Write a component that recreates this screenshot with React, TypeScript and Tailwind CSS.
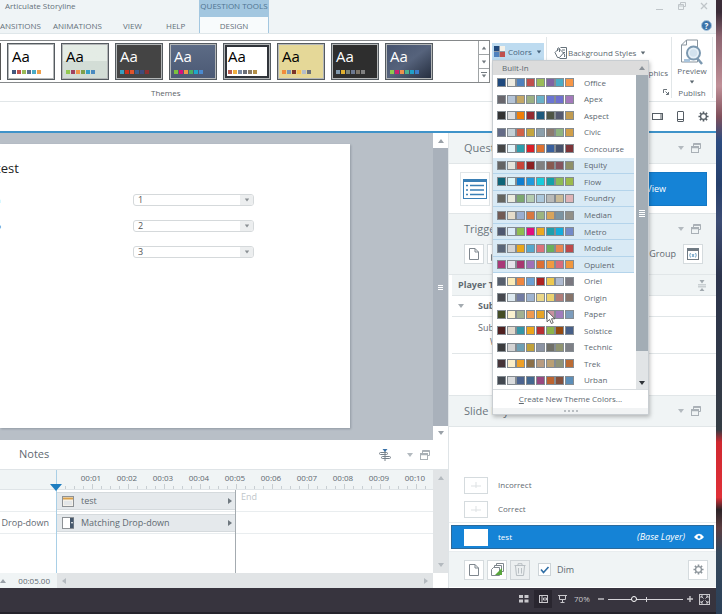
import React, { useState } from 'react';

const themes = [
    { name: 'Default', box: 'bg-white', text: 'text-black', dots: ['#44597e', '#c0504d', '#9bbb59', '#5a6d8c', '#4bacc6', '#f0a04b'] },
    { name: 'Mist', box: 'bg-linear-to-b from-[#e4ece5] from-50% to-[#d3ddd6] to-50%', text: 'text-black', dots: ['#92c951', '#a04060', '#f0964a', '#7fa04c', '#35a0c8', '#4a8ac0'] },
    { name: 'Charcoal', box: 'bg-[#444444]', text: 'text-white', dots: ['#35a0c0', '#c8301c', '#e0542c', '#3a5c8c', '#3d4c7c', '#8c3030'] },
    { name: 'Slate', box: 'bg-linear-to-b from-[#5c6b85] to-[#4c5a75]', text: 'text-white', dots: ['#7cc040', '#d8107c', '#f0964a', '#4cb060', '#1ea8c8', '#4a8ad0'] },
    { name: 'Frame', box: 'bg-white inset-ring-2 inset-ring-[#30343a]', text: 'text-black', dots: ['#b85c50', '#f0b040', '#7c8ca4', '#6c7078', '#8c7c64', '#b49048'] },
    { name: 'Sand', box: 'bg-[#e5d898]', text: 'text-black', dots: ['#f08c3c', '#7c98b4', '#7c3428', '#f8c050', '#b4bcc8', '#6c7078'] },
    { name: 'Coal', box: 'bg-[#2e2e2e]', text: 'text-white', dots: ['#8098ac', '#e0b030', '#7c8478', '#6c7890', '#7c7468', '#808080'] },
    { name: 'Dusk', box: 'bg-linear-to-br from-[#46536e] via-[#56637c] to-[#262f40]', text: 'text-white', dots: ['#8cc850', '#c82070', '#f0904c', '#4cb090', '#20a0c8', '#3c7cc8'] },
];

const colorSets = [
    { name: 'Office', colors: ['#1f497d', '#eeece1', '#4f81bd', '#c0504d', '#9bbb59', '#8064a2', '#4bacc6', '#f79646'] },
    { name: 'Apex', colors: ['#69676d', '#b5c4d6', '#c4a868', '#9cb084', '#6bb1c9', '#6b76d3', '#6f70cf', '#a379bb'] },
    { name: 'Aspect', colors: ['#323232', '#dedede', '#f07f09', '#932a30', '#1b587c', '#4e5545', '#555a70', '#c19b50'] },
    { name: 'Civic', colors: ['#646b86', '#c5d1d7', '#d16349', '#c4a540', '#8c9fab', '#8c7b70', '#8fb480', '#d19f49'] },
    { name: 'Concourse', colors: ['#464646', '#e6f5fa', '#2d9eac', '#da1f28', '#dd7030', '#39609d', '#47536c', '#7d3438'] },
    { name: 'Equity', colors: ['#646464', '#e5e4dc', '#c84438', '#8b2022', '#808080', '#875a50', '#85555e', '#8f9068'] },
    { name: 'Flow', colors: ['#0f6478', '#dbf5f9', '#0f7ed0', '#209add', '#18cbdc', '#14a0a8', '#8cba56', '#9cba4c'] },
    { name: 'Foundry', colors: ['#646560', '#eaebde', '#7ca870', '#b4ccb0', '#acc8dc', '#b9bab8', '#c8ba98', '#deb4b7'] },
    { name: 'Median', colors: ['#715a54', '#e5dcca', '#9aaed0', '#d87840', '#9cb480', '#d8a45c', '#7c94a2', '#929088'] },
    { name: 'Metro', colors: ['#4e5870', '#dcebf8', '#8fbc50', '#e0107e', '#eaa820', '#1e9eac', '#14acdc', '#738ac8'] },
    { name: 'Module', colors: ['#5a6678', '#d4d4d4', '#e9a61c', '#55a8cc', '#dc727a', '#6bb05c', '#e88651', '#bd4a4a'] },
    { name: 'Opulent', colors: ['#a83878', '#e6e4ea', '#a83670', '#a070b8', '#dc7034', '#f09a40', '#d86c7c', '#f0963d'] },
    { name: 'Oriel', colors: ['#575f6d', '#fbecb8', '#ee8640', '#6ca0d4', '#ac2220', '#ecc850', '#aebad0', '#7a7880'] },
    { name: 'Origin', colors: ['#46484e', '#dde9f0', '#727ca3', '#9fb4d0', '#ead688', '#ecd270', '#b07c78', '#86746a'] },
    { name: 'Paper', colors: ['#444d26', '#fbf2d0', '#a2b092', '#f09a50', '#e7a428', '#c892a0', '#a07cbc', '#7c9cbc'] },
    { name: 'Solstice', colors: ['#4f2020', '#e2dace', '#3496a7', '#eca41c', '#b83034', '#8cb44c', '#964a10', '#475f88'] },
    { name: 'Technic', colors: ['#3b3c3e', '#d4d4d4', '#6ea0b4', '#c0a13c', '#8c94a4', '#707068', '#909470', '#7e8086'] },
    { name: 'Trek', colors: ['#463438', '#fbeec9', '#eea028', '#8c7048', '#b89c80', '#baa074', '#909478', '#bc6c34'] },
    { name: 'Urban', colors: ['#424850', '#dadcde', '#4c6490', '#446890', '#984880', '#bc6430', '#84503c', '#5c8eb8'] },
];

const highlighted = ['Equity', 'Flow', 'Foundry', 'Median', 'Metro', 'Module', 'Opulent'];

const seconds = ['00:01', '00:02', '00:03', '00:04', '00:05', '00:06', '00:07', '00:08', '00:09', '00:10'];

type IconProps = { className?: string };

const Triangle = ({ dir = 'down', className = '' }: { dir?: 'up' | 'down' | 'left' | 'right', className?: string }) => {
    const points = {
        up: '0,5 3,1 6,5',
        down: '0,1 3,5 6,1',
        left: '5,0 1,3 5,6',
        right: '1,0 5,3 1,6',
    };
    return (
        <svg viewBox="0 0 6 6" className={`w-[6px] h-[6px] shrink-0 ${className}`} fill="currentColor"><polygon points={points[dir]} /></svg>
    );
};

const WindowsIcon = () => (
    <svg viewBox="0 0 10 10" className="w-[10px] h-[10px]" fill="none" stroke="#a9b0b6">
        <path d="M2.500 3V.5h7v5H8" />
        <path d="M2.500 1.200h7" strokeWidth="1.500" />
        <rect x=".5" y="3.500" width="7" height="6" />
        <path d="M.5 4.500h7" strokeWidth="1.500" />
    </svg>
);

const PageIcon = () => (
    <svg viewBox="0 0 10 12" className="w-[10px] h-[12px]" fill="none" stroke="#7f878e">
        <path d="M.5.5H6L9.500 4v7.500H.5z" />
        <path d="M6 .5V4h3.500" />
    </svg>
);

const TrashIcon = () => (
    <svg viewBox="0 0 12 13" className="w-[12px] h-[13px]" fill="none" stroke="#b9bfc3">
        <path d="M.5 2.500h11M4 2.500V.7h4v1.800M1.500 3l1 9.500h7l1-9.500M4.500 5v5.500M7.500 5v5.500" />
    </svg>
);

const CopyIcon = () => (
    <svg viewBox="0 0 13 13" className="w-[13px] h-[13px]" fill="#fff" stroke="#7f878e">
        <path d="M5.500.5h7v8h-7z" />
        <path d="M3.500 2.500h7v8h-7z" />
        <path d="M.5 6.500l2-2h6v8h-8z" />
        <path d="M4 12l7-7v7z" fill="#58a53c" stroke="none" />
    </svg>
);

const GearIcon = ({ className }: IconProps) => (
    <svg viewBox="0 0 12 12" className={className} fill="none" stroke="currentColor">
        <circle cx="6" cy="6" r="3.200" strokeWidth="1.400" />
        <path d="M6 .5v2M6 9.500v2M.5 6h2M9.500 6h2M2.100 2.100l1.400 1.400M8.500 8.500l1.400 1.400M2.100 9.900l1.400-1.400M8.500 3.500l1.400-1.400" strokeWidth="1.800" />
    </svg>
);

const PanelTools = () => (
    <div className="flex items-center gap-[7px]">
        <button aria-label="Options" className="text-[#b3babf]"><Triangle /></button>
        <button aria-label="Float panel"><WindowsIcon /></button>
    </div>
);

const TitleBar = () => (
    <header className="flex h-[34px] bg-[#eff4f6] border-b border-[#dfe7ea] text-[8px] text-[#63707a]">
        <div className="w-[199px] shrink-0">
            <div className="h-[12px] pl-[5px] leading-[12px] whitespace-nowrap">Articulate Storyline</div>
            <nav className="flex mt-[8px] h-[12px] leading-[12px]">
                <a href="#transitions" className="w-[53px]">ANSITIONS</a>
                <a href="#animations" className="w-[70px]">ANIMATIONS</a>
                <a href="#view" className="w-[43px]">VIEW</a>
                <a href="#help">HELP</a>
            </nav>
        </div>
        <div className="w-[70px] shrink-0 border-x border-[#a3c7e0] text-center whitespace-nowrap">
            <div className="h-[17px] bg-[#a3c7e0] leading-[12px] text-[#4f7390]">QUESTION TOOLS</div>
            <a href="#design" className="block h-[16px] bg-[#f8fbfc] leading-[18px]">DESIGN</a>
        </div>
        <div className="flex-1 flex flex-col items-end justify-between pr-[4px]">
            <div className="flex gap-[14px] h-[12px] items-center text-[#bfc5c9] pr-[4px]">
                <button aria-label="Minimize"><svg viewBox="0 0 8 8" className="size-[8px]"><path d="M0 7.500h7" stroke="currentColor" /></svg></button>
                <button aria-label="Restore"><svg viewBox="0 0 8 8" className="size-[8px]" fill="none" stroke="currentColor"><path d="M2.500 2.500v-2h5v4h-2M.5 2.500h5v5h-5zM.5 4h5" /></svg></button>
                <button aria-label="Close"><svg viewBox="0 0 8 8" className="size-[8px]"><path d="M1 1l6 6M7 1l-6 6" stroke="currentColor" strokeWidth="1.300" /></svg></button>
            </div>
            <button aria-label="Help" className="size-[11px] mb-[2px] rounded-full bg-[#3a72a8] border border-[#a9c4dc] text-white font-bold text-[8px] leading-[9px]">?</button>
        </div>
    </header>
);

const ThemeGallery = () => (
    <section className="flex-1 min-w-0 pt-[6px]">
        <div className="flex h-[43px] border-y border-r border-[#85888a]">
            <div className="flex flex-1 min-w-0 gap-[6px] py-[2px] overflow-hidden">
                <div className="w-px shrink-0 bg-[#555]"></div>
                {themes.map((t) => (
                    <button key={t.name} aria-label={t.name} className="w-[48px] h-[37px] shrink-0 border border-[#555b60] p-px bg-[#b4b7b8]">
                        <div className={`size-full pl-[3px] pt-[2px] text-left ${t.box} ${t.text}`}>
                            <div className="text-[15px] leading-[18px]">Aa</div>
                            <div className="flex gap-px mt-[5px]">
                                {t.dots.map((d) => <span key={d} className="w-[4px] h-[4px]" style={{ backgroundColor: d }}></span>)}
                            </div>
                        </div>
                    </button>
                ))}
            </div>
            <div className="w-[11px] flex flex-col border-l border-[#a0a4a6] text-[#737a80] divide-y divide-[#a0a4a6]">
                <button aria-label="Previous row" className="flex-1 flex items-center justify-center"><Triangle dir="up" className="scale-75" /></button>
                <button aria-label="Next row" className="flex-1 flex items-center justify-center"><Triangle className="scale-75" /></button>
                <button aria-label="More themes" className="flex-1 flex flex-col items-center justify-center"><span className="w-[6px] h-px bg-current"></span><Triangle className="scale-75" /></button>
            </div>
        </div>
        <h2 className="ml-[151px] mt-[4px] text-[8px] leading-[12px] text-[#5c6369]">Themes</h2>
    </section>
);

const ColorsMenu = ({ selected, onPick }: { selected: string, onPick: (name: string) => void }) => (
    <div className="absolute top-full left-0 z-10 w-[157px] bg-white border border-[#c9ced2] shadow-[1px_2px_4px_rgba(0,0,0,0.25)] text-[8px] text-[#5d6870]">
        <div className="flex h-[328px]">
            <div className="flex-1 flex flex-col">
                <div className="h-[14px] bg-[#dcdcdc] pl-[9px] leading-[14px] shrink-0">Built-In</div>
                {colorSets.map((set) => (
                    <button
                        key={set.name}
                        aria-pressed={selected === set.name}
                        onClick={() => onPick(set.name)}
                        className={highlighted.includes(set.name)
                            ? 'flex flex-1 items-center pl-[4px] mr-[2px] bg-[#d9eaf5] border-b border-[#b4d4eb]'
                            : 'flex flex-1 items-center pl-[4px] mr-[2px] border-b border-transparent'}
                    >
                        <span className="flex w-[77px] mr-[10px] justify-between">
                            {set.colors.map((c, i) => <span key={i} className="w-[9px] h-[9px] border border-[#858c92]" style={{ backgroundColor: c }}></span>)}
                        </span>
                        {set.name}
                    </button>
                ))}
            </div>
            <div className="w-[12px] flex flex-col items-center bg-[#e1e4e6]">
                <div className="h-[14px] w-full flex items-center justify-center bg-[#dcdcdc] text-[#8b9299]"><Triangle dir="up" /></div>
                <div className="h-[276px] w-full bg-[#a3adb5] flex items-center justify-center">
                    <div className="w-[6px] h-[7px] border-y border-white flex items-center"><span className="w-full h-[3px] border-y border-white"></span></div>
                </div>
                <div className="flex-1 flex items-end pb-[3px] text-[#2f3338]"><Triangle /></div>
            </div>
        </div>
        <button className="block w-full h-[19px] border-t border-[#d9dde0] text-center leading-[18px] text-[#5d6870]">
            <u>C</u>reate New Theme Colors...
        </button>
        <div className="h-[6px] bg-[#f1f3f4] flex items-center justify-center gap-[2px]">
            {[0, 1, 2, 3].map((n) => <span key={n} className="size-[2px] bg-[#b9bec2]"></span>)}
        </div>
        <svg viewBox="0 0 10 15" className="absolute left-[53px] top-[249px] w-[10px] h-[15px]">
            <path d="M1 .8v11l2.600-2.300 1.700 4 1.900-.8-1.700-3.900h3.400z" fill="#fff" stroke="#444" strokeWidth=".8" />
        </svg>
    </div>
);

const Ribbon = () => {
    const [scheme, setScheme] = useState('Office');

    return (
        <div className="flex h-[68px] bg-white border-b border-[#e1e6e8] text-[8px] text-[#5c6870]">
            <ThemeGallery />
            <div className="relative w-[54px] ml-[2px] pt-[9px] shrink-0">
                <div className="relative w-[52px]">
                    <button className="flex items-center w-full h-[17px] bg-[#bddbf0] pl-[2px] text-[#45637c]">
                        <svg viewBox="0 0 11 11" className="size-[11px] mr-[3px]">
                            <rect width="11" height="11" fill="#8f98a4" />
                            <rect width="5" height="5" fill="#1f497d" />
                            <rect x="6" width="5" height="5" fill="#f4f2ea" />
                            <rect y="6" width="5" height="5" fill="#4f81bd" />
                            <rect x="6" y="6" width="5" height="5" fill="#c0504d" />
                        </svg>
                        Colors
                        <Triangle className="ml-[4px] scale-75" />
                    </button>
                    <ColorsMenu selected={scheme} onPick={setScheme} />
                </div>
            </div>
            <div className="w-[126px] shrink-0 border-x border-[#e1e6e8] my-[3px] pt-[8px] flex flex-col items-end whitespace-nowrap">
                <button className="flex items-center h-[16px] self-start pl-[7px]">
                    <svg viewBox="0 0 13 12" className="w-[13px] h-[12px] mr-px" fill="none" stroke="#66727b">
                        <path d="M6.500.5h6v11h-7M8 3h3M8.500 5.500H11" />
                        <path d="M1 5.500l4-4 4.500 4.500-4 4.500H3.500z" fill="#fff" />
                        <path d="M3.500 4V1.500q1-1.500 2 0V5M9.500 6q2 2 1 4" />
                    </svg>
                    Background Styles
                    <Triangle className="ml-[4px] scale-75" />
                </button>
                <div className="flex items-center h-[14px] mt-[5px] pr-[3px]">Hide Background Graphics</div>
                <button aria-label="More background options" className="mt-[9px] mr-[2px]">
                    <svg viewBox="0 0 6 6" className="size-[6px]" fill="none" stroke="#6b747b"><path d="M.5 4V.5H4M2.500 2.500l3 3M5.500 3v2.500H3" /></svg>
                </button>
            </div>
            <div className="w-[41px] shrink-0 border-r border-[#e1e6e8] my-[3px] mr-[3px] text-center">
                <button className="flex flex-col items-center w-full leading-[12px]">
                    <svg viewBox="0 0 24 26" className="w-[24px] h-[26px] mt-[2px]" fill="none">
                        <path d="M1.500 6L6.500 1H17.500V23H1.500z" fill="#fff" stroke="#89949d" />
                        <path d="M1.500 6H6.500V1" stroke="#89949d" />
                        <path d="M4 20h6v3H4z" fill="#a9c4dc" />
                        <path d="M17 19l5 6" stroke="#7b98b0" strokeWidth="2.500" />
                        <circle cx="13.500" cy="14" r="6.500" fill="#e7f1f8" stroke="#7b98b0" strokeWidth="2" />
                        <circle cx="13.500" cy="14" r="3.800" fill="#d2e2ee" />
                    </svg>
                    Preview
                    <Triangle className="my-[2px] scale-75" />
                </button>
                <div className="leading-[12px]">Publish</div>
            </div>
        </div>
    );
};

const ViewBar = () => (
    <div className="h-[29px] flex items-center justify-end gap-[14px] pr-[7px] bg-white text-[#565e65]">
        <button aria-label="Tablet landscape"><svg viewBox="0 0 11 7" className="w-[11px] h-[7px]" fill="none" stroke="currentColor"><rect x=".5" y=".5" width="10" height="6" /><path d="M9 1v5" /></svg></button>
        <button aria-label="Phone portrait"><svg viewBox="0 0 7 11" className="w-[7px] h-[11px]" fill="none" stroke="currentColor"><rect x=".5" y=".5" width="6" height="10" rx=".5" /><path d="M1 8.500h5" /></svg></button>
        <button aria-label="Player settings"><GearIcon className="size-[11px]" /></button>
    </div>
);

const Answer = ({ label, value }: { label: string, value: string }) => {
    const [choice, setChoice] = useState(value);

    return (
        <div className="flex items-center h-[12px]">
            <label htmlFor={`answer-${label}`} className="w-[137px] -ml-[4px] text-[8px] text-[#333]">{label}</label>
            <div className="relative w-[121px]">
                <select
                    id={`answer-${label}`}
                    value={choice}
                    onChange={(e) => setChoice(e.target.value)}
                    className="block appearance-none w-full h-[12px] border border-[#d5d9db] rounded-[3px] pl-[4px] text-[9px] leading-[10px] text-[#555] bg-white"
                >
                    <option>1</option>
                    <option>2</option>
                    <option>3</option>
                </select>
                <span className="absolute right-px top-px w-[13px] h-[10px] bg-[#eceeef] rounded-r-[2px] flex items-center justify-center text-[#8a8f93] pointer-events-none"><Triangle className="scale-75" /></span>
            </div>
        </div>
    );
};

const Stage = () => (
    <div className="flex h-[307px] bg-[#b8bfc7]">
        <div className="flex-1 min-w-0 pt-[11px] overflow-hidden">
            <div className="w-[350px] h-[284px] bg-white shadow-[1px_1px_2px_rgba(90,100,110,0.4)]">
                <h1 className="-ml-[4px] pt-[15px] text-[13px] leading-[18px] text-[#222]">test</h1>
                <div className="flex flex-col gap-[14px] mt-[17px]">
                    <Answer label="a" value="1" />
                    <Answer label="b" value="2" />
                    <Answer label="c" value="3" />
                </div>
            </div>
        </div>
        <div className="w-[15px] flex flex-col bg-[#a9b1bb] text-[#9aa1a8]">
            <button aria-label="Scroll up" className="h-[15px] bg-white flex items-center justify-center"><Triangle dir="up" /></button>
            <div className="flex-1 flex items-center justify-center">
                <span className="w-[5px] h-[5px] border-y border-white flex items-center"><span className="w-full h-px bg-white"></span></span>
            </div>
            <button aria-label="Scroll down" className="h-[14px] bg-white flex items-center justify-center"><Triangle /></button>
        </div>
    </div>
);

const Track = ({ name, icon }: { name: string, icon: React.ReactNode }) => (
    <div className="h-[22px] pt-[2px] border-b border-[#e9edef]">
        <div className="w-[178px] h-[18px] bg-[#e5e9ec] border-y border-[#d5dadd] flex items-center pl-[5px] pr-[2px] text-[#5f6971]">
            {icon}
            <span className="ml-[7px] flex-1">{name}</span>
            <Triangle dir="right" className="text-[#6f787f]" />
        </div>
    </div>
);

const Timeline = () => (
    <section className="bg-white text-[9px] text-[#5f6971]">
        <div className="flex h-[30px] items-center justify-between pl-[19px] pr-[18px] border-b border-[#dfe4e7]">
            <h2 className="text-[11px]">Notes</h2>
            <div className="flex items-center gap-[16px]">
                <svg viewBox="0 0 12 12" className="size-[12px]" fill="#fff" stroke="#78828a">
                    <rect x=".5" y="3.500" width="8" height="2" rx="1" />
                    <rect x="2.500" y="7.500" width="9" height="2" rx="1" />
                    <path d="M6 1v11" />
                    <path d="M3.500 0h5L6 3z" fill="#3a72a8" stroke="none" />
                </svg>
                <PanelTools />
            </div>
        </div>
        <div className="flex h-[103px]">
            <div className="w-[56px] shrink-0 overflow-hidden">
                <div className="h-[20px] bg-[#f0f4f5] border-b border-[#dfe4e7]"></div>
                <div className="h-[22px] border-b border-[#e9edef]"></div>
                <div className="h-[22px] border-b border-[#e9edef] flex items-center justify-end pr-[7px] whitespace-nowrap">g Drop-down</div>
            </div>
            <div className="relative flex-1 min-w-0 overflow-hidden border-l border-[#a9cfe6]">
                <div className="h-[20px] bg-[#f0f4f5] border-b border-[#dfe4e7] flex flex-col justify-between overflow-hidden">
                    <div className="flex pl-[16px] pt-[2px] text-[8px] leading-[12px]">
                        {seconds.map((s) => <span key={s} className="w-[36px] shrink-0 text-center">{s}</span>)}
                    </div>
                    <div className="flex items-end h-[5px]">
                        {Array.from({ length: 41 }, (_, i) => (
                            <span key={i} className={i % 4 === 3 ? 'w-[9px] h-[5px] shrink-0 border-r border-[#c8ced2]' : 'w-[9px] h-[3px] shrink-0 border-r border-[#c8ced2]'}></span>
                        ))}
                    </div>
                </div>
                <Track name="test" icon={
                    <svg viewBox="0 0 12 11" className="w-[12px] h-[11px]"><rect x=".5" y=".5" width="11" height="10" fill="#f4f1ea" stroke="#8d9195" /><path d="M1 1.500h10v2H1z" fill="#d8a04c" /><path d="M2 5h8v4H2z" fill="#e3e6e8" /></svg>
                } />
                <Track name="Matching Drop-down" icon={
                    <svg viewBox="0 0 12 12" className="w-[12px] h-[12px]"><rect x=".5" y=".5" width="11" height="11" fill="#fff" stroke="#8d9195" /><path d="M8 1h3.500v10H8z" fill="#46586c" /><path d="M9 5h2L10 7z" fill="#fff" /></svg>
                } />
                <div className="absolute left-[178px] top-[20px] bottom-0 w-px bg-[#a4abb0]"></div>
                <div className="absolute left-[184px] top-[21px] leading-[12px] text-[#c0c6ca]">End</div>
            </div>
            <div className="w-[15px] flex flex-col justify-between items-center py-[5px] bg-[#e1e4e6] text-[#b4babf]">
                <Triangle dir="up" />
                <Triangle />
            </div>
        </div>
        <div className="relative flex h-[15px]">
            <svg viewBox="0 0 12 7" className="absolute left-[50px] -top-[89px] w-[12px] h-[7px]"><path d="M0 0h12L6 7z" fill="#1d7dc0" /></svg>
            <div className="w-[57px] bg-[#f0f4f5] flex items-center justify-between pr-[7px] text-[8px] overflow-hidden">
                <Triangle dir="up" className="text-[#9aa1a8]" />
                <span>00:05.00</span>
            </div>
            <div className="flex-1 flex items-center justify-between px-[4px] bg-[#e1e4e6] text-[#b4babf]">
                <Triangle dir="left" />
                <Triangle dir="right" />
            </div>
            <div className="w-[15px]"></div>
        </div>
    </section>
);

const PanelHeader = ({ title }: { title: string }) => (
    <div className="flex h-[30px] items-center justify-between pl-[15px] pr-[15px] bg-[#f0f4f5] text-[#6b757d]">
        <h2 className="text-[11px]">{title}</h2>
        <PanelTools />
    </div>
);

const squareButton = 'size-[20px] flex items-center justify-center bg-white border border-[#d5dbde]';

const Layer = ({ name }: { name: string }) => (
    <div className="flex items-center h-[24px] pl-[15px] text-[8px] text-[#5f6971]">
        <span className="w-[24px] h-[17px] border border-[#d5dbde] flex items-center justify-center mr-[10px]">
            <svg viewBox="0 0 10 8" className="w-[10px] h-[8px]"><path d="M0 5h10M5 1v6" stroke="#dde1e3" /></svg>
        </span>
        {name}
    </div>
);

const SidePanels = () => {
    const [dim, setDim] = useState(true);

    return (
        <aside className="w-[268px] shrink-0 bg-white border-l border-[#dfe4e7] text-[9px] text-[#5f6971]">
            <PanelHeader title="Question" />
            <div className="h-[51px] flex items-center justify-between pl-[11px] pr-[9px] border-y border-[#e1e6e8]">
                <button aria-label="Slide view" className="w-[30px] h-[34px] flex items-center justify-center border border-[#e1e6e8]">
                    <svg viewBox="0 0 24 20" className="w-[24px] h-[20px]" fill="none" stroke="#3a7fb5">
                        <rect x=".5" y=".5" width="23" height="19" fill="#fff" />
                        <path d="M0 1.500h24" strokeWidth="3" />
                        <path d="M3 6.500h2M3 11h2M3 15.500h2" strokeWidth="1.500" />
                        <path d="M7 6.500h14M7 11h14M7 15.500h14" strokeWidth="1.500" />
                    </svg>
                </button>
                <button className="w-[132px] h-[34px] pl-[6px] bg-[#1583d6] border border-[#1478c4] text-white">Form View</button>
            </div>
            <PanelHeader title="Triggers" />
            <div className="h-[31px] flex items-start gap-[3px] pl-[15px] pr-[13px] bg-[#f0f4f5] border-b border-[#e1e6e8]">
                <button aria-label="New trigger" className={squareButton}><PageIcon /></button>
                <button aria-label="Edit trigger" className={squareButton}><CopyIcon /></button>
                <span className="ml-auto leading-[20px] mr-[4px]">Group</span>
                <button aria-label="Variables" className={squareButton}>
                    <svg viewBox="0 0 12 12" className="size-[12px]" fill="none" stroke="#6f7a83">
                        <rect x=".5" y=".5" width="11" height="11" />
                        <path d="M0 1.500h12" strokeWidth="3" />
                        <path d="M3.500 5q-1.500 2 0 4.500M8.500 5q1.500 2 0 4.500M5 6l2 3M7 6L5 9" stroke="#4a8ab8" strokeWidth=".8" />
                    </svg>
                </button>
            </div>
            <div className="ml-[3px] h-[21px] flex items-center justify-between pl-[6px] pr-[10px] bg-[#f0f4f5] border-b border-[#e1e6e8]">
                <h3 className="font-bold">Player Triggers</h3>
                <svg viewBox="0 0 8 11" className="w-[8px] h-[11px]" fill="#a1a9af"><path d="M0 4.500h8v.8H0zM0 6.500h8v.8H0zM1.500 0h5L4 3.500zM1.500 11h5L4 8z" /></svg>
            </div>
            <div className="ml-[3px] h-[21px] flex items-center pl-[6px] gap-[14px] border-b border-[#e1e6e8] font-bold">
                <Triangle className="text-[#a4abb0]" />
                Submit
            </div>
            <div className="ml-[3px] h-[37px] pl-[26px] pt-[4px] border-b border-[#e1e6e8] leading-[14px]">
                <p>Submit interaction</p>
                <p className="pl-[12px]">When user clicks</p>
            </div>
            <div className="h-[41px]"></div>
            <div className="border-y border-[#e1e6e8]"><PanelHeader title="Slide Layers" /></div>
            <div className="pt-[46px]">
                <Layer name="Incorrect" />
                <Layer name="Correct" />
            </div>
            <div className="mt-px border-y border-[#e9edef] py-[2px] px-[2px]">
                <div className="flex items-center h-[24px] bg-[#1583d6] border border-[#2b6a9c] pl-[12px] pr-[9px] text-[8px] text-white">
                    <span className="w-[24px] h-[17px] bg-white mr-[10px]"></span>
                    test
                    <i className="ml-auto mr-[9px] text-[9px]">(Base Layer)</i>
                    <svg viewBox="0 0 10 8" className="w-[10px] h-[8px]"><path d="M0 4q5-6.500 10 0-5 6.500-10 0z" fill="#fff" /><circle cx="5" cy="4" r="1.500" fill="#1583d6" /></svg>
                </div>
            </div>
            <div className="h-[35px] flex items-center gap-[3px] pl-[15px] pr-[8px] bg-[#f0f4f5]">
                <button aria-label="New layer" className={squareButton}><PageIcon /></button>
                <button aria-label="Duplicate layer" className={squareButton}><CopyIcon /></button>
                <button aria-label="Delete layer" className="size-[20px] flex items-center justify-center bg-[#eceff0] border border-[#cfd4d7]"><TrashIcon /></button>
                <label className="flex items-center gap-[6px] ml-[5px]">
                    <span className="relative size-[13px]">
                        <input type="checkbox" checked={dim} onChange={(e) => setDim(e.target.checked)} className="peer block appearance-none size-[13px] bg-white border border-[#cdd4d8]" />
                        <svg viewBox="0 0 13 13" className="absolute inset-0 size-[13px] pointer-events-none hidden peer-checked:block" fill="none"><path d="M3 6.500l2.500 3L10.500 4" stroke="#2f6ea5" strokeWidth="1.600" /></svg>
                    </span>
                    Dim
                </label>
                <button aria-label="Layer properties" className={`${squareButton} ml-auto text-[#8d959b]`}><GearIcon className="size-[11px]" /></button>
            </div>
        </aside>
    );
};

const StatusBar = () => {
    const [zoom, setZoom] = useState(34);

    return (
        <footer className="flex items-center justify-end h-[26px] pb-[2px] pr-[6px] bg-[#37343e] border-b-2 border-[#25232b] text-[8px] text-[#c9c8cc]">
            <button aria-label="Story view"><svg viewBox="0 0 10 8" className="w-[10px] h-[8px]" fill="currentColor"><path d="M0 0h4v3H0zM5.500 0h4v3h-4zM0 4.500h4v3H0zM5.500 4.500h4v3h-4z" /></svg></button>
            <button aria-label="Slide view" className="w-[18px] h-[18px] flex items-center justify-center ml-[5px] mr-[6px] bg-[#29262f]"><svg viewBox="0 0 9 8" className="w-[9px] h-[8px]" fill="none" stroke="currentColor"><rect x=".5" y=".5" width="8" height="7" /><path d="M3 1v6M4.500 3h3v2h-3z" /></svg></button>
            <button aria-label="Slide show"><svg viewBox="0 0 9 8" className="w-[9px] h-[8px]" fill="none" stroke="currentColor"><path d="M0 .5h9M1.500 1v3.500h6V1M4.500 4.500v3M2.500 7.500h4" /></svg></button>
            <span className="w-[17px] mx-[7px]">70%</span>
            <button aria-label="Zoom out"><svg viewBox="0 0 6 6" className="size-[6px]"><path d="M0 3h6" stroke="currentColor" strokeWidth="1.400" /></svg></button>
            <input
                aria-label="Zoom"
                type="range"
                value={zoom}
                onChange={(e) => setZoom(Number(e.target.value))}
                className="appearance-none w-[75px] h-[7px] mx-[4px] bg-[linear-gradient(#d5d4d8,#d5d4d8),linear-gradient(#d5d4d8,#d5d4d8)] bg-[size:100%_1px,1px_5px] bg-[position:center,52%_50%] bg-no-repeat [&::-webkit-slider-thumb]:appearance-none [&::-webkit-slider-thumb]:size-[6px] [&::-webkit-slider-thumb]:rounded-full [&::-webkit-slider-thumb]:border [&::-webkit-slider-thumb]:border-white [&::-webkit-slider-thumb]:bg-[#37343e]"
            />
            <button aria-label="Zoom in"><svg viewBox="0 0 6 6" className="size-[6px]"><path d="M0 3h6M3 0v6" stroke="currentColor" strokeWidth="1.400" /></svg></button>
            <button aria-label="Fit to window" className="ml-[6px]"><svg viewBox="0 0 11 11" className="size-[11px]" fill="none" stroke="currentColor"><rect x=".5" y=".5" width="10" height="10" /><path d="M2 4V2h2M7 2h2v2M9 7v2H7M4 9H2V7M2 2l2.500 2.500M9 2L6.500 4.500M9 9L6.500 6.500M2 9l2.500-2.500" /></svg></button>
        </footer>
    );
};

export default function App() {
    return (
        <div className="flex w-full overflow-hidden font-['Open_Sans','Noto_Sans',sans-serif]">
            <div className="flex-1 min-w-0">
                <TitleBar />
                <Ribbon />
                <ViewBar />
                <main className="flex border-t-2 border-[#3f93c9]">
                    <div className="flex-1 min-w-0">
                        <Stage />
                        <Timeline />
                    </div>
                    <SidePanels />
                </main>
                <StatusBar />
            </div>
            <div className="w-[6px] shrink-0 bg-[linear-gradient(#3a2c38_0%,#3a2c38_2%,#8c6470_6%,#c09098_14%,#80505c_19%,#2c4c80_23%,#27406c_30%,#3c4c74_36%,#2c344c_45%,#343c44_70%,#d02830_72%,#e03038_81%,#2c2428_83%,#5c3c40_86%,#34485c_90%,#2c4058_100%)]"></div>
        </div>
    );
}
